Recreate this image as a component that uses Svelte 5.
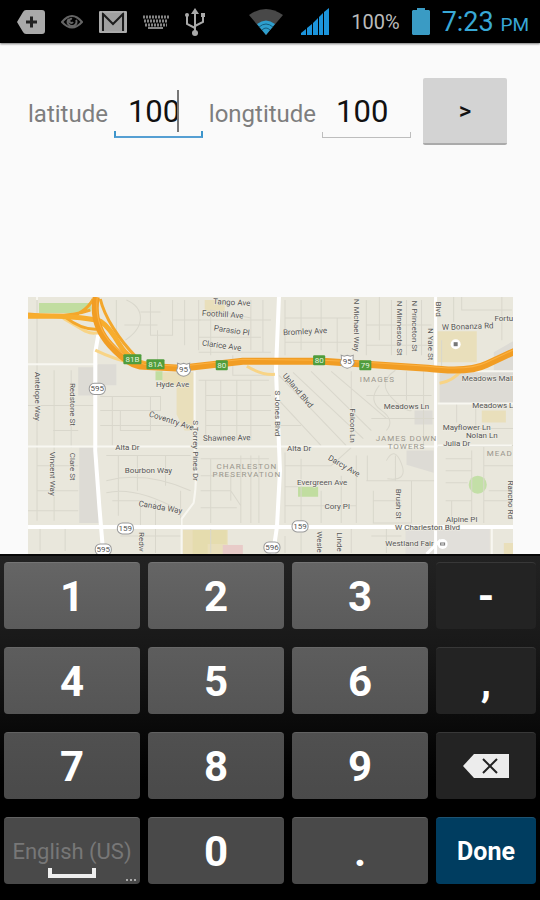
<script lang="ts">
    let latitude = "100";
    let longitude = "100";

    const rows = [
        ["1", "2", "3", "-"],
        ["4", "5", "6", ","],
        ["7", "8", "9", "del"],
        ["space", "0", ".", "done"],
    ];

    function press(key: string) {
        if (key === "del") {
            latitude = latitude.slice(0, -1);
        } else if (key === "space") {
            latitude += " ";
        } else if (key !== "done") {
            latitude += key;
        }
    }

    // x, y of the middle of the text, then its angle
    const streets: [string, number, number, number][] = [
        ["Antelope Way", 38, 396, 90],
        ["Redstone St", 73, 404, 90],
        ["Vincent Way", 53, 473, 90],
        ["Clare St", 73, 466, 90],
        ["Hyde Ave", 172, 384, 0],
        ["Coventry Ave", 171, 420, 18],
        ["Alta Dr", 127, 446, 0],
        ["Bourbon Way", 148, 469, 0],
        ["Canada Way", 160, 506, 10],
        ["Redw", 142, 541, 90],
        ["Tango Ave", 231, 302, 3],
        ["Foothill Ave", 222, 314, 4],
        ["Parasio Pl", 231, 330, 8],
        ["Clarice Ave", 221, 345, 8],
        ["Bromley Ave", 304, 331, -3],
        ["Upland Blvd", 297, 390, 50],
        ["S Jones Blvd", 277, 413, 90],
        ["S Torrey Pines Dr", 195, 450, 90],
        ["Shawnee Ave", 226, 437, -1],
        ["Alta Dr", 298, 447, 0],
        ["Darcy Ave", 343, 465, 30],
        ["Evergreen Ave", 321, 481, 0],
        ["Cory Pl", 336, 505, 0],
        ["Wesle", 319, 541, 90],
        ["Linde", 339, 541, 90],
        ["N Michael Way", 356, 325, 90],
        ["Falcon Ln", 352, 425, 90],
        ["N Minnesota St", 399, 328, 90],
        ["N Princeton St", 414, 326, 90],
        ["N Yale St", 429, 344, 90],
        ["Blvd", 437, 309, 90],
        ["W Bonanza Rd", 466, 326, -2],
        ["Fortu", 502, 318, 0],
        ["Meadows Mall", 486, 378, 0],
        ["Meadows Ln", 405, 406, 0],
        ["Meadows L", 491, 405, 0],
        ["Mayflower Ln", 465, 426, 0],
        ["Nolan Ln", 480, 434, 0],
        ["Julia Dr", 455, 442, 0],
        ["Brush St", 398, 503, 90],
        ["Alpine Pl", 460, 518, 0],
        ["W Charleston Blvd", 426, 526, 0],
        ["Westland Fair", 408, 542, 0],
        ["Rancho Rd", 509, 499, 90],
    ];

    const areas: [string, number, number][] = [
        ["CHARLESTON", 246, 465],
        ["PRESERVATION", 246, 473],
        ["IMAGES", 376, 379],
        ["JAMES DOWN", 405, 437],
        ["TOWERS", 405, 445],
        ["MEAD", 498, 452],
    ];

    const exits: [string, number, number][] = [
        ["81B", 132, 359],
        ["81A", 155, 364],
        ["80", 221, 365],
        ["80", 318, 360],
        ["79", 364, 365],
    ];

    const shields: [string, number, number][] = [
        ["595", 97, 388],
        ["159", 125, 527],
        ["595", 103, 548],
        ["159", 299, 525],
        ["596", 271, 546],
    ];
</script>

<div class="screen">
    <header>
        <div class="notices">
            <svg width="28" height="24" viewBox="0 0 28 24">
                <path d="M0 12 6 2Q7 0 9 0H25Q28 0 28 3V21Q28 24 25 24H9Q7 24 6 22Z" fill="#a9a9a9" />
                <path d="M14.500 6.500V17.500M9 12H20" stroke="#222" stroke-width="3" />
            </svg>
            <svg width="22" height="14" viewBox="0 0 22 14" fill="none" stroke="#656565" stroke-width="2">
                <path d="M1 7Q11-5 21 7Q11 18 1 7Z" />
                <path d="M15 5A4.500 4 0 1 1 8 4M12 7A2 2 0 1 1 11 4" />
            </svg>
            <svg width="28" height="22" viewBox="0 0 28 22">
                <rect width="28" height="22" rx="1" fill="#a0a0a0" />
                <path d="M4 20V3L14 13 24 3V20" fill="none" stroke="#1c1c1c" stroke-width="2" />
                <path d="M1 1H27V21H1Z" fill="none" stroke="#b5b5b5" stroke-width="1" />
            </svg>
            <svg width="26" height="14" viewBox="0 0 26 14" stroke="#858585" fill="none">
                <path d="M0 2H26M1 6H25M2 10H24" stroke-width="3" stroke-dasharray="2 1" />
                <path d="M5 13H20" stroke-width="2" />
            </svg>
            <svg width="20" height="28" viewBox="0 0 20 28" fill="none" stroke="#aaa" stroke-width="2">
                <path d="M10 4V24M10 20 2 16V8M10 18 18 14V7" />
                <path d="M10 0 14 6H6Z" fill="#aaa" stroke="none" />
                <circle cx="10" cy="25" r="3" fill="#aaa" stroke="none" />
                <circle cx="2" cy="7" r="2" fill="#aaa" stroke="none" />
                <path d="M16 5H20V9H16Z" fill="#aaa" stroke="none" />
            </svg>
        </div>
        <div class="system">
            <svg width="34" height="26" viewBox="0 0 34 26">
                <path d="M0 6Q17-6 34 6L17 26Z" fill="#484848" />
                <path d="M8 15Q17 8 26 15L17 26Z" fill="#2e9fce" />
                <path d="M10 18Q17 12 24 18M13 21Q17 17 21 21" fill="none" stroke="#155b7a" />
            </svg>
            <svg width="28" height="27" viewBox="0 0 28 27" fill="#1c94db">
                <path d="M0 27V25L5 21V27ZM6 27V20L11 16V27ZM12 27V15L17 10V27ZM18 27V9L22 5V27ZM23 27V4L28 0V27Z" />
            </svg>
            <span class="charge">100%</span>
            <svg width="18" height="27" viewBox="0 0 18 27" fill="#3a9bc4">
                <path d="M5 0H13V2H17L18 3V26L17 27H1L0 26V3L1 2H5Z" />
            </svg>
            <span class="clock">7:23 <small>PM</small></span>
        </div>
    </header>

    <main>
        <form on:submit|preventDefault>
            <label for="latitude">latitude</label>
            <div class="field active">
                <input id="latitude" bind:value={latitude} inputmode="numeric" />
                <span class="caret"></span>
            </div>
            <label for="longitude">longtitude</label>
            <div class="field">
                <input id="longitude" bind:value={longitude} inputmode="numeric" />
            </div>
            <button>&gt;</button>
        </form>

        <svg class="map" viewBox="28 297 485 256" preserveAspectRatio="xMinYMin slice">
            <path d="M28 297H513V553H28Z" fill="#e9e7dc" />

            <path d="M78 367H95V395H78ZM97 364H116V385H97ZM79 447H97L101 522H79Z" fill="#dddbd5" />
            <path d="M438 371H513V403H438ZM492 352 513 340V371H492ZM413 410H431V424H413ZM405 450H432V472L405 464Z" fill="#dddbd5" />
            <path d="M404 528H488V553H404Z" fill="#e1dfda" />
            <path d="M436 331H475V362H436ZM480 410H504V422H480ZM502 542H513V553H502ZM162 372H193V430H184L176 414V385H162ZM204 300H224V315H204ZM182 529H227V553H182Z" fill="#e9dfbb" />
            <path d="M192 529H226V543H207V553H192Z" fill="#e5dcae" />
            <path d="M222 544H242V553H222Z" fill="#e8cbc8" />
            <path d="M39 303H91V311L72 313H39ZM155 371H162V380H155ZM297 486H317V496H297Z" fill="#c1dda0" />
            <circle cx="476" cy="484" r="9" fill="#c3dfa7" />

            <g fill="none" stroke="#d9d7cc" stroke-width="1">
                <path d="M37 300V520M54 370V520M71 370V447M28 405H96M28 446H510M53 430H78M37 465H78M37 490H78M28 510H78" />
                <path d="M116 300V345M126 300Q140 306 140 318T125 340M150 300V335H172V300M157 330V370M172 320H200M184 300V345M140 312H160M124 325H157" />
                <path d="M100 396H160V410H100M112 396V445M120 410V430H150V396M100 425H185M106 455H190M118 455V515M106 480Q145 470 190 490M106 492Q135 485 180 510M137 455V490M165 455V485M155 500V524M180 490V524M112 500H140V524" />
                <path d="M198 300V350M198 320H270M198 337H260M198 352H270M210 355V310L250 318M250 300V350M262 300V352M232 355V375H270M198 380H268M205 380V440M220 380V440M236 380V440M250 380V440M205 395H270M205 410H270M205 425H270" />
                <path d="M200 458H268M200 475H230V500M200 490H230L240 505M240 455V522M250 455V522M258 455V522M200 507H236M210 458V522" />
                <path d="M284 300V355M284 318H350M300 300V350M320 300V350M336 318V352M284 342H350M365 300V355M378 297V340M390 300V355M405 300V355M420 300V355M365 325H430M365 345H430" />
                <path d="M278 375 345 445M292 372 362 438M310 371 370 430M330 371 385 418M278 400 320 445M278 425H300M350 371V440M378 385Q366 400 380 410T385 430M394 370Q376 382 390 397T410 410M405 371V400M422 371V445M365 395H430M370 418H434" />
                <path d="M284 452V522M284 465H330L350 447M300 458V522M284 486H297M284 505H355M320 490V522M340 475V522M355 455V522M366 455V480H394V455M365 480H434M372 490V522H410V480M372 500H400M385 460Q393 445 400 463T386 478" />
                <path d="M440 340V371M444 428H512M444 445H512M444 458H470M482 465H512M444 470H470M444 482H466M487 490H512M444 500H470M482 500H512M450 500V520M470 450V522M482 445V522M455 403V422M474 403V425M500 297V340M475 310H510M452 297V322M460 297V310H475" />
                <path d="M40 526V550M65 526V550M120 535H180M155 526V552M210 526V552M284 535V552M300 532V552M350 528V552M370 535H400M385 528V552" />
            </g>

            <g fill="none" stroke="#f8f7f1" stroke-width="2">
                <path d="M28 364H97M28 446H436M194 371V450Q197 480 193 502L181 518V553M436 371H513M436 403H513M436 445H510M490 528V553M37 297V300" />
            </g>
            <g fill="none" stroke="#fff" stroke-width="4">
                <path d="M28 526H513" />
                <path d="M98 335 95 352V450L99 505 103 553M278 297 275 370 279 470 276 526 272 553" />
                <path d="M434 297V553" stroke-width="3" />
            </g>
            <path d="M425 553 439 539" stroke="#fff" stroke-width="3" />

            <g fill="none" stroke-linejoin="round">
                <path d="M63 318 85 331Q99 337 101 326M95 350Q115 360 140 365M246 366Q261 375 274 374M438 383Q451 381 460 370" stroke="#f8d486" stroke-width="3" />
                <path d="M28 317H65Q84 315 93 299M65 317Q82 330 97 329M28 314Q67 318 90 310M100 299Q103 312 113 328T136 357" stroke="#f3a72b" stroke-width="3" />
                <path d="M28 316H53Q84 317 100 321 109 327 119 344T148 364" stroke="#f7ad2e" stroke-width="5" />
                <path d="M96 297Q91 324 110 345T143 366L180 368 242 361 322 361 365 364 426 368Q467 373 485 364L513 351" stroke="#f19d24" stroke-width="7" />
                <path d="M97 297Q94 325 111 343T144 364L180 366 242 359 322 360 365 362 426 366Q467 371 485 362L513 349" stroke="#fcb141" stroke-width="1" />
            </g>

            <g class="streets">
                {#each streets as [name, x, y, angle]}
                    <text transform="translate({x} {y}) rotate({angle})" dy="3">{name}</text>
                {/each}
            </g>
            <g class="areas">
                {#each areas as [name, x, y]}
                    <text {x} {y} dy="3">{name}</text>
                {/each}
            </g>
            <g class="exits">
                {#each exits as [name, x, y]}
                    <rect x={x - (name.length > 2 ? 9 : 6)} y={y - 5} width={name.length > 2 ? 18 : 12} height="10" rx="1" />
                    <text {x} {y} dy="3">{name}</text>
                {/each}
            </g>
            <g class="shields">
                {#each shields as [name, x, y]}
                    <rect x={x - 8} y={y - 5} width="16" height="11" rx="5" />
                    <text {x} {y} dy="3">{name}</text>
                {/each}
                {#each [["95", 183, 369], ["95", 346, 361]] as [name, x, y]}
                    <path transform="translate({x} {y})" d="M-6-6-3-5 0-6 3-5 6-6Q5-2 7 1 6 6 0 7-6 6-7 1-5-2-6-6Z" />
                    <text {x} {y} dy="3">{name}</text>
                {/each}
            </g>
            <circle cx="454" cy="344" r="5" fill="#fff" />
            <path d="M452 342H456V346H452Z" fill="#777" />
            <circle cx="441" cy="543" r="5" fill="#fff" />
            <path d="M439 544V542H443V544Z" fill="none" stroke="#777" />
        </svg>
    </main>

    <div class="keyboard">
        {#each rows as row}
            {#each row as key, i}
                <button
                    class="key"
                    class:dark={i === 3}
                    class:done={key === "done"}
                    class:space={key === "space"}
                    aria-label={key === "del" ? "Delete" : null}
                    on:click={() => press(key)}
                >
                    {#if key === "del"}
                        <svg width="46" height="24" viewBox="0 0 46 24">
                            <path d="M0 12 11 0H46V24H11Z" fill="#ececec" />
                            <path d="M20 5 34 19M34 5 20 19" stroke="#222" stroke-width="2" />
                        </svg>
                    {:else if key === "space"}
                        <span>English (US)</span>
                        <svg class="bar" width="48" height="10" viewBox="0 0 48 10">
                            <path d="M2 0V8H46V0" fill="none" stroke="#eee" stroke-width="4" />
                        </svg>
                        <i class="dots"></i>
                    {:else if key === "done"}
                        Done
                    {:else}
                        {key}
                    {/if}
                </button>
            {/each}
        {/each}
    </div>
</div>

<style>
    :global(body) {
        margin: 0;
        background: #000;
    }

    .screen {
        display: flex;
        flex-direction: column;
        min-height: 100vh;
        font-family: Roboto, "Liberation Sans", sans-serif;
        background: #fafafa;
    }

    svg {
        display: block;
        flex: none;
    }

    header {
        display: flex;
        align-items: center;
        justify-content: space-between;
        height: 43px;
        padding: 0 11px 0 17px;
        background: #000;
        box-shadow: 0 1px 2px #777;
    }

    .notices,
    .system {
        display: flex;
        align-items: center;
        gap: 16px;
    }

    .system {
        gap: 12px;
    }

    .system svg:nth-child(2) {
        margin: 0 10px 0 6px;
    }

    .charge {
        color: #bbb;
        font-size: 20px;
    }

    .clock {
        color: #38a8d6;
        font-size: 27px;
        white-space: nowrap;
    }

    .clock small {
        font-size: 19px;
    }

    main {
        display: flex;
        flex: 1;
        flex-direction: column;
        padding: 35px 27px 0 28px;
    }

    form {
        display: flex;
        align-items: center;
        gap: 6px;
        padding-right: 6px;
        margin-bottom: 152px;
    }

    label {
        color: #7e7e7e;
        font-size: 24px;
        line-height: 28px;
        padding-top: 4px;
    }

    .field {
        position: relative;
        flex: 1;
        min-width: 0;
    }

    .field::after {
        content: "";
        position: absolute;
        inset: auto 0 0;
        height: 5px;
        border: 1px solid #bdbdbd;
        border-top: 0;
        pointer-events: none;
    }

    .field.active::after {
        border: 2px solid #3c95cb;
        border-top: 0;
        border-bottom-color: #559fd3;
    }

    input {
        box-sizing: border-box;
        display: block;
        width: 100%;
        height: 52px;
        padding: 0 14px;
        border: 0;
        outline: 0;
        background: none;
        color: #111;
        font: 31px Roboto, "Liberation Sans", sans-serif;
    }

    .caret {
        position: absolute;
        top: 4px;
        left: 63px;
        width: 2px;
        height: 42px;
        background: #777;
    }

    form button {
        width: 84px;
        height: 67px;
        margin-left: 6px;
        border: 0;
        border-bottom: 2px solid #aaa;
        border-radius: 2px;
        background: #d3d3d3;
        color: #111;
        font: 500 24px Roboto, "Liberation Sans", sans-serif;
    }

    .map {
        flex: 1 0 256px;
        width: 100%;
        height: 256px;
    }

    .map text {
        text-anchor: middle;
    }

    .streets {
        fill: #555;
        stroke: #f1efe6;
        stroke-width: 1px;
        paint-order: stroke;
        font-size: 8px;
    }

    .areas {
        fill: #99968c;
        font-size: 8px;
        letter-spacing: 1px;
    }

    .exits {
        fill: #4f9d3d;
        font-size: 8px;
    }

    .exits text {
        fill: #e4f2dd;
    }

    .shields {
        fill: #fff;
        stroke: #999;
        font-size: 8px;
    }

    .shields text {
        fill: #555;
        stroke: none;
    }

    .keyboard {
        display: grid;
        grid-template-columns: 136fr 136fr 136fr 100fr;
        grid-auto-rows: 67px;
        gap: 18px 8px;
        padding: 6px 4px 16px;
        border-top: 2px solid #080808;
        background: linear-gradient(#222, #191919 25%, #000 65%);
    }

    .key {
        position: relative;
        display: flex;
        align-items: center;
        justify-content: center;
        min-width: 0;
        padding: 0;
        border: 0;
        border-top: 1px solid #686868;
        border-radius: 4px;
        background: linear-gradient(#5d5d5d, #555);
        color: #fff;
        font: bold 42px Roboto, "Liberation Sans", sans-serif;
    }

    .key:nth-child(-n + 4) {
        background: linear-gradient(#656565, #5b5b5b);
        border-color: #747474;
    }

    .key:nth-child(n + 9) {
        background: linear-gradient(#505050, #4a4a4a);
        border-color: #626262;
    }

    .key:nth-child(n + 13) {
        background: #494949;
    }

    .key.dark:nth-child(n) {
        background: #232323;
        border-color: #383838;
    }

    .key.done:nth-child(n) {
        background: #003d60;
        border-color: #1d5372;
        font-size: 25px;
    }

    .key.space {
        color: #777;
        font-size: 22px;
        font-weight: 400;
    }

    .bar {
        position: absolute;
        bottom: 6px;
        left: calc(50% - 24px);
    }

    .dots {
        position: absolute;
        right: 4px;
        bottom: 3px;
        width: 10px;
        border-bottom: 2px dotted #aaa;
    }
</style>
